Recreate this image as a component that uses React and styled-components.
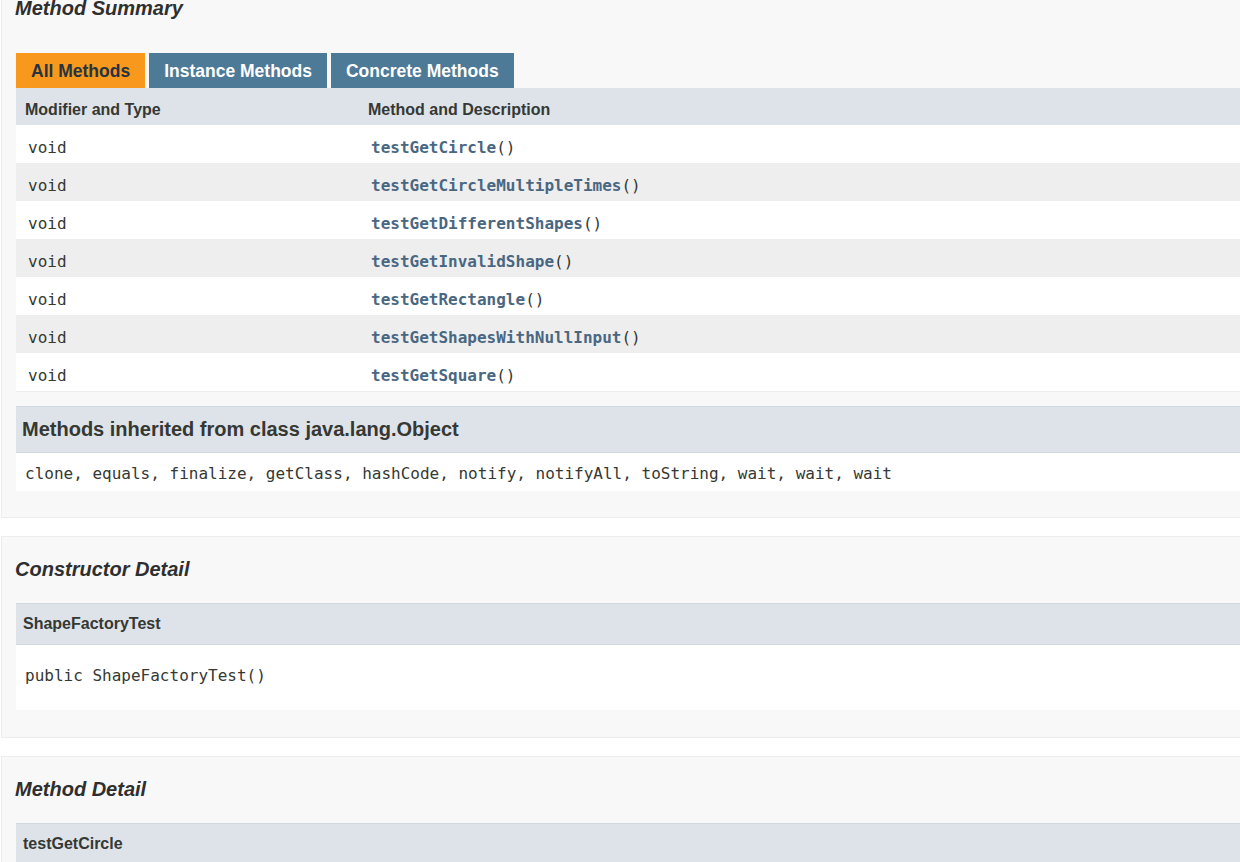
import React from "react";
import styled, { createGlobalStyle } from "styled-components";

const GlobalStyle = createGlobalStyle`
  html, body {
    margin: 0;
    padding: 0;
    background: #ffffff;
    overflow: hidden;
  }
  body {
    font-family: "Liberation Sans", Arial, sans-serif;
    color: #353833;
  }
  * {
    box-sizing: border-box;
  }
`;

const methods = [
  "testGetCircle",
  "testGetCircleMultipleTimes",
  "testGetDifferentShapes",
  "testGetInvalidShape",
  "testGetRectangle",
  "testGetShapesWithNullInput",
  "testGetSquare",
];

const tabs = [
  { label: "All Methods", active: true },
  { label: "Instance Methods" },
  { label: "Concrete Methods" },
];

const App = () => {
  return (
    <Page>
      <GlobalStyle />
      <Block>
        <Heading $gap={33}>Method Summary</Heading>
        <Tabs>
          {tabs.map((t) => (
            <Tab key={t.label} $active={t.active}>
              {t.label}
            </Tab>
          ))}
        </Tabs>
        <SummaryTable>
          <HeadCell>Modifier and Type</HeadCell>
          <HeadCell>Method and Description</HeadCell>
          {methods.map((m, i) => (
            <React.Fragment key={m}>
              <Cell $alt={i % 2 === 1}>void</Cell>
              <Cell $alt={i % 2 === 1}>
                <MethodLink>{m}</MethodLink>()
              </Cell>
            </React.Fragment>
          ))}
        </SummaryTable>
        <Inherited>
          <InheritedTitle>Methods inherited from class java.lang.Object</InheritedTitle>
          <InheritedList>
            clone, equals, finalize, getClass, hashCode, notify, notifyAll, toString, wait, wait, wait
          </InheritedList>
        </Inherited>
      </Block>

      <Block $detail>
        <Heading $gap={22}>Constructor Detail</Heading>
        <MemberHeader>ShapeFactoryTest</MemberHeader>
        <MemberBody>public ShapeFactoryTest()</MemberBody>
      </Block>

      <Block $detail>
        <Heading $gap={22}>Method Detail</Heading>
        <MemberHeader>testGetCircle</MemberHeader>
        <MemberBody>public void testGetCircle()</MemberBody>
      </Block>
    </Page>
  );
};
export default App;

const Page = styled.div`
  width: 1300px;
  margin-top: -25px;
  display: flex;
  flex-direction: column;
  gap: 18px;
`;

const Block = styled.section`
  margin-left: 1px;
  border: 1px solid #ededed;
  background-color: #f8f8f8;
  padding: 21px 14px ${(p) => (p.$detail ? "27px" : "26px")} 14px;
  display: flex;
  flex-direction: column;
`;

const Heading = styled.h3`
  margin: 0 0 ${(p) => p.$gap}px -1px;
  font-size: 20px;
  line-height: 23px;
  font-weight: bold;
  font-style: italic;
  color: #2f2f2f;
`;

const Tabs = styled.div`
  display: flex;
  gap: 4px;
`;

const Tab = styled.span`
  height: 35px;
  line-height: 35px;
  padding: 1px 15px 0 15px;
  font-size: 17.5px;
  font-weight: bold;
  white-space: nowrap;
  background-color: ${(p) => (p.$active ? "#f8981d" : "#4d7a97")};
  color: ${(p) => (p.$active ? "#253441" : "#ffffff")};
`;

const SummaryTable = styled.div`
  display: grid;
  grid-template-columns: 343px 1fr;
  border-bottom: 1px solid #eeeeee;
  margin-bottom: 14px;
`;

const HeadCell = styled.div`
  height: 37px;
  padding: 6px 0 0 9px;
  line-height: 31px;
  background-color: #dee3e9;
  font-size: 16px;
  font-weight: bold;
  color: #353833;
`;

const Cell = styled.div`
  height: 38px;
  padding: 8px 0 0 12px;
  line-height: 30px;
  background-color: ${(p) => (p.$alt ? "#eeeeee" : "#ffffff")};
  font-family: "DejaVu Sans Mono", "Liberation Mono", monospace;
  font-size: 16px;
  color: #353833;
`;

const MethodLink = styled.span`
  font-weight: bold;
  color: #4a6782;
`;

const Inherited = styled.div`
  display: flex;
  flex-direction: column;
`;

const InheritedTitle = styled.div`
  height: 47px;
  line-height: 45px;
  padding-left: 6px;
  border-top: 1px solid #d0d9e0;
  border-bottom: 1px solid #d0d9e0;
  background-color: #dee3e9;
  font-size: 20px;
  font-weight: bold;
  color: #353833;
`;

const InheritedList = styled.div`
  height: 38px;
  padding: 4px 0 0 9px;
  line-height: 34px;
  background-color: #ffffff;
  font-family: "DejaVu Sans Mono", "Liberation Mono", monospace;
  font-size: 16px;
  color: #353833;
  white-space: nowrap;
`;

const MemberHeader = styled.div`
  height: 42px;
  line-height: 40px;
  padding-left: 7px;
  border-top: 1px solid #d0d9e0;
  border-bottom: 1px solid #d0d9e0;
  background-color: #dee3e9;
  font-size: 16px;
  font-weight: bold;
  color: #353833;
`;

const MemberBody = styled.div`
  padding: 21px 9px 24px 9px;
  line-height: 20px;
  background-color: #ffffff;
  font-family: "DejaVu Sans Mono", "Liberation Mono", monospace;
  font-size: 16px;
  color: #353833;
`;
